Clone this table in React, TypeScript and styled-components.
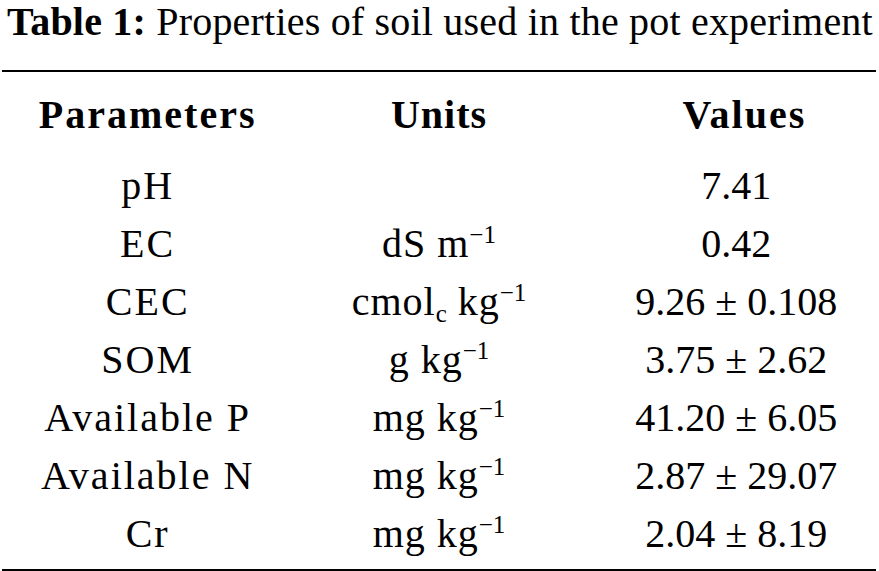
import React from 'react';
import styled, { createGlobalStyle } from 'styled-components';

const GlobalStyle = createGlobalStyle`
  html, body {
    margin: 0;
    padding: 0;
    background: #fff;
  }
  body {
    font-family: "Liberation Serif", "Times New Roman", serif;
    color: #000;
  }
`;

const Page = styled.div`
  width: 874px;
  padding: 0 3px 0 2px;
`;

const Caption = styled.div`
  font-size: 40px;
  line-height: 44px;
  height: 44px;
  margin: 0 0 26px 5px;
  letter-spacing: 0.2px;
  white-space: nowrap;
`;

const CaptionLabel = styled.span`
  font-weight: bold;
`;

const Table = styled.table`
  width: 100%;
  border-collapse: collapse;
  table-layout: fixed;
  border-top: 2.5px solid #000;
  border-bottom: 2.5px solid #000;
  font-size: 40px;
`;

// column-wise tweaks: the source face is wider for letters than for digits
const Row = styled.tr`
  & > :nth-child(1) {
    letter-spacing: 2px;
  }
  & > :nth-child(2) {
    letter-spacing: 1px;
  }
  & > :nth-child(3) {
    padding-left: 12px;
  }
`;

const HeadRow = styled(Row)`
  & > * {
    letter-spacing: 2px;
  }
  & > :nth-child(3) {
    padding-left: 28px;
  }
`;

const HeadCell = styled.th`
  height: 85px;
  padding: 0;
  line-height: 85px;
  font-weight: bold;
  text-align: center;
  vertical-align: middle;
`;

const Cell = styled.td<{ $last?: boolean }>`
  height: ${(p) => (p.$last ? 61 : 58)}px;
  padding: 0 0 ${(p) => (p.$last ? 3 : 0)}px;
  line-height: 58px;
  text-align: center;
  vertical-align: top;
  white-space: nowrap;
`;

const Sup = styled.sup`
  font-size: 25px;
  line-height: 0;
  vertical-align: 14px;
  letter-spacing: 0;
`;

const Sub = styled.sub`
  font-size: 25px;
  line-height: 0;
  vertical-align: -7px;
  letter-spacing: 0;
`;

type RowData = { param: string; unit: React.ReactNode; value: string };

const perKg = (pre: React.ReactNode) => (
  <>
    {pre} kg<Sup>−1</Sup>
  </>
);

const rows: RowData[] = [
  { param: 'pH', unit: '', value: '7.41' },
  { param: 'EC', unit: <>dS m<Sup>−1</Sup></>, value: '0.42' },
  { param: 'CEC', unit: perKg(<>cmol<Sub>c</Sub></>), value: '9.26 ± 0.108' },
  { param: 'SOM', unit: perKg('g'), value: '3.75 ± 2.62' },
  { param: 'Available P', unit: perKg('mg'), value: '41.20 ± 6.05' },
  { param: 'Available N', unit: perKg('mg'), value: '2.87 ± 29.07' },
  { param: 'Cr', unit: perKg('mg'), value: '2.04 ± 8.19' },
];

export default function App() {
  return (
    <Page>
      <GlobalStyle />
      <Caption>
        <CaptionLabel>Table 1:</CaptionLabel> Properties of soil used in the pot experiment
      </Caption>
      <Table>
        <thead>
          <HeadRow>
            <HeadCell>Parameters</HeadCell>
            <HeadCell>Units</HeadCell>
            <HeadCell>Values</HeadCell>
          </HeadRow>
        </thead>
        <tbody>
          {rows.map((r, i) => {
            const last = i === rows.length - 1;
            return (
              <Row key={r.param}>
                <Cell $last={last}>{r.param}</Cell>
                <Cell $last={last}>{r.unit}</Cell>
                <Cell $last={last}>{r.value}</Cell>
              </Row>
            );
          })}
        </tbody>
      </Table>
    </Page>
  );
}
